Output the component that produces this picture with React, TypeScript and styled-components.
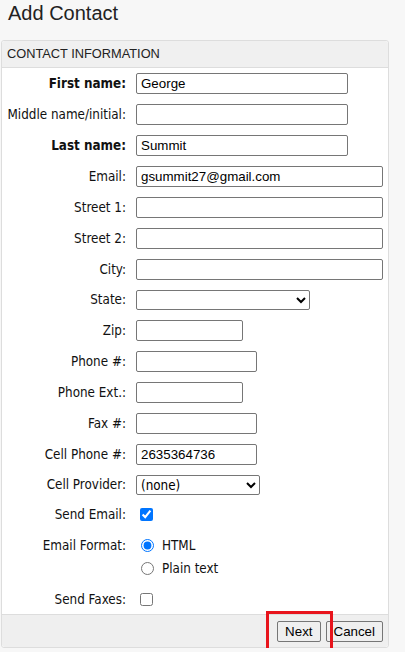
import { Fragment } from "react";
import styled, { createGlobalStyle } from "styled-components";

const GlobalStyle = createGlobalStyle`
  html, body {
    margin: 0;
    padding: 0;
    background: #f7f7f7;
  }
  body {
    font-family: "Liberation Sans", Arial, sans-serif;
    color: #222;
  }
`;

const labelFont = `"DejaVu Sans Condensed", "DejaVu Sans", Verdana, sans-serif`;

const Title = styled.h1`
  margin: 0;
  padding: 0 8px;
  font-size: 20px;
  font-weight: normal;
  line-height: 26px;
  color: #222;
`;

const Panel = styled.div`
  margin: 14px 0 0 1px;
  width: 388px;
  box-sizing: border-box;
  background: #fff;
  border: 1px solid #ddd;
  border-radius: 3px;
`;

const PanelHeader = styled.div`
  height: 26px;
  line-height: 26px;
  padding-left: 5px;
  background: #f0f0f0;
  border-bottom: 1px solid #ddd;
  border-radius: 3px 3px 0 0;
  font-size: 12.8px;
  color: #222;
`;

const Form = styled.div`
  display: grid;
  grid-template-columns: 124px 1fr;
  column-gap: 10px;
  row-gap: 10px;
  padding: 5px 0;
`;

const Label = styled.label<{ bold?: boolean; top?: boolean }>`
  display: flex;
  align-items: ${({ top }) => (top ? "flex-start" : "center")};
  justify-content: flex-end;
  line-height: ${({ top }) => (top ? "23px" : "16px")};
  font-family: ${labelFont};
  font-size: 13.333px;
  font-weight: ${({ bold }) => (bold ? "bold" : "normal")};
  color: #111;
  white-space: nowrap;
`;

const Field = styled.div`
  display: flex;
  align-items: center;
`;

const TextInput = styled.input<{ w: number }>`
  box-sizing: border-box;
  width: ${({ w }) => w}px;
  height: 21px;
  margin: 0;
  padding: 1px 4px;
  border: 1px solid #767676;
  border-radius: 2px;
  font-family: "Liberation Sans", Arial, sans-serif;
  font-size: 13.333px;
  color: #000;
  background: #fff;
`;

const Select = styled.select<{ w: number }>`
  box-sizing: border-box;
  width: ${({ w }) => w}px;
  height: 20px;
  margin: 0;
  border: 1px solid #767676;
  border-radius: 2px;
  font-family: ${labelFont};
  font-size: 13.333px;
  color: #000;
  background: #fff;
`;

const OptionList = styled.div`
  display: flex;
  flex-direction: column;
`;

const OptionLine = styled.label`
  display: flex;
  align-items: center;
  height: 23px;
  font-family: ${labelFont};
  font-size: 13.333px;
  color: #111;
`;

const Radio = styled.input`
  margin: 0 8px 0 5px;
  width: 13px;
  height: 13px;
`;

const Check = styled.input`
  margin: 3px 0 3px 4px;
  width: 13px;
  height: 13px;
`;

const Footer = styled.div`
  display: flex;
  justify-content: flex-end;
  gap: 5px;
  padding: 6px 5px 5px;
  background: #efefef;
  border-top: 1px solid #ddd;
  border-radius: 0 0 3px 3px;
`;

const Button = styled.button`
  box-sizing: border-box;
  height: 21px;
  padding: 0 7px;
  margin: 0;
  border: 1px solid #767676;
  border-radius: 2px;
  background: #efefef;
  font-family: "Liberation Sans", Arial, sans-serif;
  font-size: 13.333px;
  color: #000;
`;

const Highlighted = styled.span`
  position: relative;
  display: inline-flex;

  &::after {
    content: "";
    position: absolute;
    left: -11px;
    right: -12px;
    top: -10px;
    bottom: -10px;
    border: 3px solid #e8141c;
    pointer-events: none;
  }
`;

type Row = { label: string; bold?: boolean; value?: string; width: number };

const textRows: Row[] = [
  { label: "First name:", bold: true, value: "George", width: 212 },
  { label: "Middle name/initial:", width: 212 },
  { label: "Last name:", bold: true, value: "Summit", width: 212 },
  { label: "Email:", value: "gsummit27@gmail.com", width: 247 },
  { label: "Street 1:", width: 247 },
  { label: "Street 2:", width: 247 },
  { label: "City:", width: 247 },
];

const phoneRows: Row[] = [
  { label: "Zip:", width: 107 },
  { label: "Phone #:", width: 121 },
  { label: "Phone Ext.:", width: 107 },
  { label: "Fax #:", width: 121 },
  { label: "Cell Phone #:", value: "2635364736", width: 121 },
];

const renderRows = (rows: Row[]) =>
  rows.map((r) => (
    <Fragment key={r.label}>
      <Label bold={r.bold}>{r.label}</Label>
      <Field>
        <TextInput w={r.width} defaultValue={r.value ?? ""} />
      </Field>
    </Fragment>
  ));

export default function App() {
  return (
    <>
      <GlobalStyle />
      <Title>Add Contact</Title>
      <Panel>
        <PanelHeader>CONTACT INFORMATION</PanelHeader>
        <Form>
          {renderRows(textRows)}
          <Label>State:</Label>
          <Field>
            <Select w={174} defaultValue="">
              <option value=""></option>
            </Select>
          </Field>
          {renderRows(phoneRows)}
          <Label>Cell Provider:</Label>
          <Field>
            <Select w={124} defaultValue="none">
              <option value="none">(none)</option>
            </Select>
          </Field>
          <Label>Send Email:</Label>
          <Field>
            <Check type="checkbox" defaultChecked />
          </Field>
          <Label top>Email Format:</Label>
          <OptionList>
            <OptionLine>
              <Radio type="radio" name="fmt" defaultChecked />
              HTML
            </OptionLine>
            <OptionLine>
              <Radio type="radio" name="fmt" />
              Plain text
            </OptionLine>
          </OptionList>
          <Label>Send Faxes:</Label>
          <Field>
            <Check type="checkbox" />
          </Field>
        </Form>
        <Footer>
          <Highlighted>
            <Button>Next</Button>
          </Highlighted>
          <Button>Cancel</Button>
        </Footer>
      </Panel>
    </>
  );
}
